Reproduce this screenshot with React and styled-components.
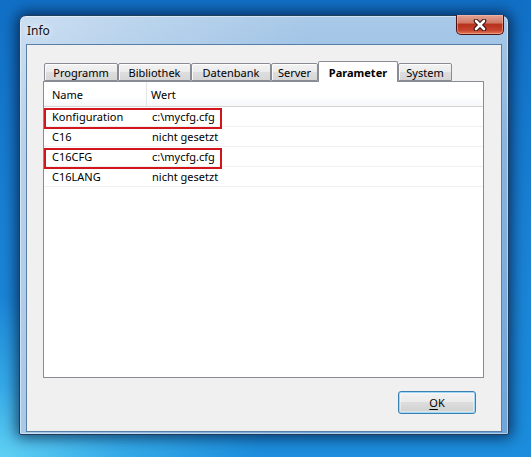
import styled, { createGlobalStyle } from "styled-components";

const GlobalStyle = createGlobalStyle`
  html, body {
    margin: 0;
    padding: 0;
  }
  body {
    font-family: "Segoe UI", "Noto Sans", "Open Sans", sans-serif;
    font-size: 11px;
    color: #000;
  }
`;

const tabs = [
  { label: "Programm", width: 74 },
  { label: "Bibliothek", width: 73 },
  { label: "Datenbank", width: 80 },
  { label: "Server", width: 47 },
  { label: "Parameter", width: 80, active: true },
  { label: "System", width: 54 },
];

const params = [
  { name: "Konfiguration", value: "c:\\mycfg.cfg", marked: true },
  { name: "C16", value: "nicht gesetzt" },
  { name: "C16CFG", value: "c:\\mycfg.cfg", marked: true },
  { name: "C16LANG", value: "nicht gesetzt" },
];

export default function App() {
  return (
    <>
      <GlobalStyle />
      <Desktop>
        <Window>
          <TitleBar>
            <Title>Info</Title>
            <CloseButton aria-label="Schließen">
              <svg width="14" height="12" viewBox="0 0 14 12">
                <path
                  d="M3 2 L11 10 M11 2 L3 10"
                  stroke="#3a1010"
                  strokeWidth="4.6"
                  strokeLinecap="round"
                />
                <path
                  d="M3 2 L11 10 M11 2 L3 10"
                  stroke="#ffffff"
                  strokeWidth="2.6"
                  strokeLinecap="round"
                />
              </svg>
            </CloseButton>
          </TitleBar>
          <Client>
            <TabControl>
              <TabStrip>
                {tabs.map((t) => (
                  <Tab key={t.label} $width={t.width} $active={t.active}>
                    {t.label}
                  </Tab>
                ))}
              </TabStrip>
              <Panel>
                <ListHeader>
                  <HeaderCell $first>Name</HeaderCell>
                  <HeaderCell>Wert</HeaderCell>
                </ListHeader>
                {params.map((p) => (
                  <Row key={p.name}>
                    <NameCell>{p.name}</NameCell>
                    <ValueCell>{p.value}</ValueCell>
                    {p.marked && <Marker />}
                  </Row>
                ))}
              </Panel>
            </TabControl>
            <Footer>
              <OkButton>
                <u>O</u>K
              </OkButton>
            </Footer>
          </Client>
        </Window>
      </Desktop>
    </>
  );
}

const Desktop = styled.div`
  width: 531px;
  height: 457px;
  box-sizing: border-box;
  padding: 15px 22px 22px 19px;
  overflow: hidden;
  background:
    radial-gradient(ellipse 260px 160px at 0% 100%, #5fd0f4 0%, rgba(70, 190, 240, 0.6) 45%, rgba(40, 150, 220, 0) 100%),
    linear-gradient(180deg, #1170c6 0%, #1a82d4 55%, #1b8ddc 100%);
`;

const Window = styled.div`
  width: 490px;
  height: 420px;
  box-sizing: border-box;
  display: flex;
  flex-direction: column;
  border: 1px solid #203c5c;
  border-radius: 7px 7px 2px 2px;
  background: linear-gradient(
      90deg,
      rgba(255, 255, 255, 0.4) 0%,
      rgba(255, 255, 255, 0.18) 30%,
      rgba(255, 255, 255, 0) 60%
    ),
    linear-gradient(180deg, #a9c9e8 0%, #8ab5df 30%, #6fa5d9 100%);
  box-shadow: 0 0 14px 3px rgba(0, 10, 40, 0.65),
    inset 0 0 0 1px rgba(255, 255, 255, 0.45);
`;

const TitleBar = styled.div`
  height: 28px;
  display: flex;
  justify-content: space-between;
  align-items: flex-start;
  padding: 0 4px 0 7px;
`;

const Title = styled.span`
  margin-top: 6px;
  font-size: 12px;
  color: #101010;
  text-shadow: 0 0 6px rgba(255, 255, 255, 0.95), 0 0 10px rgba(255, 255, 255, 0.8);
`;

const CloseButton = styled.div`
  width: 48px;
  height: 20px;
  box-sizing: border-box;
  margin-top: -1px;
  display: flex;
  align-items: center;
  justify-content: center;
  border: 1px solid #4a1414;
  border-top: none;
  border-radius: 0 0 5px 5px;
  background: linear-gradient(
    180deg,
    #e3a393 0%,
    #d17a68 40%,
    #b7321f 50%,
    #c8432c 80%,
    #e07a56 100%
  );
  box-shadow: inset 0 0 0 1px rgba(255, 200, 190, 0.45);
`;

const Client = styled.div`
  flex: 1;
  margin: 0 6px 2px 6px;
  display: flex;
  flex-direction: column;
  gap: 13px;
  padding: 16px 17px 17px 16px;
  border: 1px solid #5a7fa4;
  background: #f0f0f0;
`;

const TabControl = styled.div`
  flex: 1;
  display: flex;
  flex-direction: column;
`;

const TabStrip = styled.div`
  height: 20px;
  display: flex;
  align-items: flex-end;
  padding-left: 1px;
  position: relative;
  z-index: 1;
`;

const Tab = styled.div`
  width: ${(p) => p.$width}px;
  height: ${(p) => (p.$active ? 21 : 18)}px;
  margin-bottom: ${(p) => (p.$active ? -1 : 0)}px;
  box-sizing: border-box;
  display: flex;
  align-items: center;
  justify-content: center;
  padding-top: ${(p) => (p.$active ? 0 : 1)}px;
  border: 1px solid #898c95;
  border-bottom: ${(p) => (p.$active ? "none" : "1px solid #898c95")};
  border-radius: 2px 2px 0 0;
  font-weight: ${(p) => (p.$active ? 700 : 400)};
  color: #000;
  background: ${(p) =>
    p.$active
      ? "#ffffff"
      : "linear-gradient(180deg, #f3f3f3 0%, #ebebeb 50%, #dedede 51%, #d6d6d6 100%)"};
  box-shadow: ${(p) =>
    p.$active ? "none" : "inset 0 1px 0 #fff, inset 1px 0 0 #fafafa"};
`;

const Panel = styled.div`
  flex: 1;
  border: 1px solid #898c95;
  background: #ffffff;
`;

const ListHeader = styled.div`
  height: 24px;
  display: flex;
  border-bottom: 1px solid #d5d5d5;
  background: linear-gradient(180deg, #ffffff 0%, #ffffff 60%, #f6f7f9 100%);
`;

const HeaderCell = styled.div`
  width: ${(p) => (p.$first ? "103px" : "auto")};
  flex: ${(p) => (p.$first ? "none" : 1)};
  display: flex;
  align-items: center;
  padding-left: ${(p) => (p.$first ? "8px" : "4px")};
  box-sizing: border-box;
  border-right: ${(p) => (p.$first ? "1px solid #e3e5e8" : "none")};
  color: #000;
`;

const Row = styled.div`
  position: relative;
  height: 19px;
  display: flex;
  align-items: center;
  border-bottom: 1px solid #f0f0f0;
`;

const NameCell = styled.div`
  width: 103px;
  box-sizing: border-box;
  padding-left: 8px;
`;

const ValueCell = styled.div`
  padding-left: 5px;
`;

const Marker = styled.div`
  position: absolute;
  left: 0;
  top: 1px;
  width: 178px;
  height: 21px;
  box-sizing: border-box;
  border: 2px solid #d2141c;
`;

const Footer = styled.div`
  display: flex;
  justify-content: flex-end;
  padding-right: 8px;
`;

const OkButton = styled.div`
  width: 78px;
  height: 23px;
  box-sizing: border-box;
  display: flex;
  align-items: center;
  justify-content: center;
  border: 1px solid #3c7fb1;
  border-radius: 3px;
  background: linear-gradient(
    180deg,
    #f2f2f2 0%,
    #ebebeb 48%,
    #dddddd 50%,
    #cfcfcf 100%
  );
  box-shadow: inset 0 0 0 1px #9fd8f5, inset 0 0 0 2px rgba(255, 255, 255, 0.4);
  color: #000;

  u {
    text-decoration-thickness: 1px;
    text-underline-offset: 2px;
  }
`;
